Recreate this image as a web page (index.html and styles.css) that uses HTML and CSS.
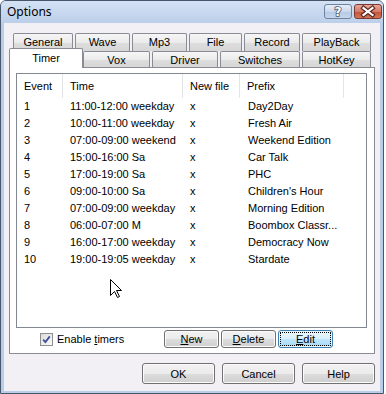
FILE: index.html
```html
<!DOCTYPE html>
<html>
<head>
<meta charset="utf-8">
<title>Options</title>
<link rel="stylesheet" href="styles.css">
</head>
<body>
<div class="window">
  <div class="titlebar">
    <span class="title">Options</span>
    <div class="caption">
      <div class="cbtn cbtn-help">
        <svg width="26" height="13" viewBox="0 0 26 13"><text x="13" y="11" text-anchor="middle" class="qmark">?</text></svg>
      </div>
      <div class="cbtn cbtn-close">
        <svg width="26" height="13" viewBox="0 0 26 13">
          <path d="M8.5 3 L17.5 10 M17.5 3 L8.5 10" class="x-dark"/>
          <path d="M8.5 3 L17.5 10 M17.5 3 L8.5 10" class="x-light"/>
        </svg>
      </div>
    </div>
  </div>
  <div class="client">
    <div class="tabs">
      <div class="tabrow row1">
        <div class="tab">General</div>
        <div class="tab">Wave</div>
        <div class="tab">Mp3</div>
        <div class="tab">File</div>
        <div class="tab">Record</div>
        <div class="tab">PlayBack</div>
      </div>
      <div class="tabrow row2">
        <div class="tab selected">Timer</div>
        <div class="tab">Vox</div>
        <div class="tab">Driver</div>
        <div class="tab">Switches</div>
        <div class="tab">HotKey</div>
      </div>
    </div>
    <div class="panel">
      <div class="listview">
        <div class="lv-header">
          <div class="hcell">Event</div>
          <div class="hcell">Time</div>
          <div class="hcell">New file</div>
          <div class="hcell">Prefix</div>
          <div class="hcell filler"></div>
        </div>
        <div class="lv-row"><span>1</span><span>11:00-12:00 weekday</span><span>x</span><span>Day2Day</span></div>
        <div class="lv-row"><span>2</span><span>10:00-11:00 weekday</span><span>x</span><span>Fresh Air</span></div>
        <div class="lv-row"><span>3</span><span>07:00-09:00 weekend</span><span>x</span><span>Weekend Edition</span></div>
        <div class="lv-row"><span>4</span><span>15:00-16:00 Sa</span><span>x</span><span>Car Talk</span></div>
        <div class="lv-row"><span>5</span><span>17:00-19:00 Sa</span><span>x</span><span>PHC</span></div>
        <div class="lv-row"><span>6</span><span>09:00-10:00 Sa</span><span>x</span><span>Children's Hour</span></div>
        <div class="lv-row"><span>7</span><span>07:00-09:00 weekday</span><span>x</span><span>Morning Edition</span></div>
        <div class="lv-row"><span>8</span><span>06:00-07:00 M</span><span>x</span><span>Boombox Classr...</span></div>
        <div class="lv-row"><span>9</span><span>16:00-17:00 weekday</span><span>x</span><span>Democracy Now</span></div>
        <div class="lv-row"><span>10</span><span>19:00-19:05 weekday</span><span>x</span><span>Stardate</span></div>
        <svg class="cursor" width="13" height="20" viewBox="0 0 13 20">
          <path d="M0.5 0.5 L0.5 16.5 L4.5 12.5 L7.5 18.5 L9.5 17.5 L6.5 11.5 L11.5 11.5 Z" fill="#fff" stroke="#000" stroke-width="1" stroke-linejoin="miter"/>
        </svg>
      </div>
      <div class="panel-footer">
        <label class="check">
          <span class="box">
            <svg width="11" height="11" viewBox="0 0 11 11"><path d="M2.2 5.6 L4.4 8 L8.8 2.4" fill="none" stroke="#3d4f96" stroke-width="1.8"/></svg>
          </span>
          <span>Enable <u>t</u>imers</span>
        </label>
        <div class="btn-group">
          <button class="btn btn-sm"><u>N</u>ew</button>
          <button class="btn btn-sm"><u>D</u>elete</button>
          <button class="btn btn-sm btn-focus"><u>E</u>dit</button>
        </div>
      </div>
    </div>
    <div class="dialog-buttons">
      <button class="btn btn-lg">OK</button>
      <button class="btn btn-lg">Cancel</button>
      <button class="btn btn-lg">Help</button>
    </div>
  </div>
</div>
</body>
</html>
```
FILE: styles.css
```css
* { box-sizing: border-box; }
html, body { margin: 0; padding: 0; }
body {
  width: 386px;
  height: 394px;
  overflow: hidden;
  background: #ffffff;
  font-family: "Liberation Sans", Arial, sans-serif;
  font-size: 11px;
  color: #000;
}

.window {
  width: 384px;
  height: 394px;
  border: 1px solid #48566c;
  border-radius: 6px 6px 0 0;
  background: #b9cde8;
  display: flex;
  flex-direction: column;
  overflow: hidden;
}

.titlebar {
  height: 22px;
  flex: none;
  display: flex;
  align-items: flex-start;
  background: linear-gradient(#d4e2f4, #bccfea);
}
.title {
  font-family: "Noto Sans", "Liberation Sans", sans-serif;
  font-size: 12px;
  line-height: 22px;
  padding-left: 6px;
  color: #000;
}
.caption {
  margin-left: auto;
  margin-top: 3px;
  margin-right: 1px;
  display: flex;
  gap: 2px;
}
.cbtn {
  width: 28px;
  height: 15px;
  border-radius: 3px;
  display: flex;
  align-items: center;
  justify-content: center;
}
.cbtn-help {
  border: 1px solid #6f829f;
  background: linear-gradient(#e6eef8 0%, #cad9ec 50%, #b5c9e3 51%, #c4d6ee 100%);
}
.cbtn-close {
  border: 1px solid #7b3a30;
  background: linear-gradient(#e5a99d 0%, #d67a66 50%, #c34f36 51%, #d0765b 100%);
}
.qmark {
  font-family: "DejaVu Sans", sans-serif;
  font-weight: bold;
  font-size: 12px;
  fill: #ffffff;
  stroke: #4a5870;
  stroke-width: 1.6px;
  paint-order: stroke;
}
.x-dark { stroke: #5e241b; stroke-width: 4.4; stroke-linecap: square; fill: none; }
.x-light { stroke: #ffffff; stroke-width: 2.2; stroke-linecap: square; fill: none; }

.client {
  flex: 1;
  margin: 0 3px 2px 3px;
  background: #f2f0f5;
  display: flex;
  flex-direction: column;
}

.tabs {
  margin: 10px 5px 0 5px;
}
.tabrow {
  display: grid;
  gap: 2px;
}
.row1 {
  height: 18px;
  padding-left: 4px;
  grid-template-columns: 60px 55px 55px 53px 56px 69px;
}
.row2 {
  height: 16px;
  padding-left: 2px;
  grid-template-columns: 70px 67px 66px 80px 69px;
}
.tab {
  border: 1px solid #898c95;
  border-bottom: none;
  border-radius: 2px 2px 0 0;
  background: linear-gradient(#f6f6f6 0%, #ebebeb 50%, #dedede 51%, #d6d6d6 100%);
  display: flex;
  align-items: center;
  justify-content: center;
  white-space: nowrap;
}
.row1 .tab { padding-bottom: 1px; }
.tab.selected {
  position: relative;
  z-index: 1;
  margin: -3px -2px -1px -2px;
  background: #ffffff;
  padding-bottom: 1px;
}

.panel {
  height: 287px;
  margin: 0 5px;
  border: 1px solid #898c95;
  background: #ffffff;
  padding: 5px 7px 0 6px;
}

.listview {
  position: relative;
  height: 255px;
  border: 1px solid #828790;
  background: #ffffff;
}
.lv-header,
.lv-row {
  display: grid;
  grid-template-columns: 46px 120px 57px 104px 1fr;
}
.lv-header { height: 24px; }
.hcell {
  border-right: 1px solid #e2e4e8;
  padding-left: 7px;
  line-height: 24px;
  white-space: nowrap;
}
.hcell.filler { border-right: none; }
.lv-row { height: 17px; line-height: 17px; }
.lv-row span {
  padding-left: 7px;
  white-space: nowrap;
  overflow: hidden;
}
.lv-row span:nth-child(4) { padding-left: 8px; }
.cursor {
  position: absolute;
  left: 93px;
  top: 205px;
}

.panel-footer {
  display: flex;
  align-items: center;
  height: 18px;
  margin-top: 2px;
}
.check {
  display: flex;
  align-items: center;
  gap: 4px;
  margin-left: 24px;
}
.box {
  width: 13px;
  height: 13px;
  border: 1px solid #8e8f8f;
  background: linear-gradient(135deg, #dcdcdc, #fbfbfb);
  display: flex;
  align-items: center;
  justify-content: center;
}
.btn-group {
  margin-left: auto;
  margin-right: 34px;
  display: flex;
  gap: 2px;
}

.btn {
  font-family: inherit;
  font-size: 11px;
  color: #000;
  padding: 0;
  border: 1px solid #707070;
  border-radius: 3px;
  background: linear-gradient(#f2f2f2 0%, #ebebeb 50%, #dddddd 51%, #cfcfcf 100%);
  box-shadow: inset 0 0 0 1px #fbfbfb;
}
.btn-sm { width: 55px; height: 18px; }
.btn-lg { width: 73px; height: 21px; }
.btn-focus {
  border-color: #3c7fb1;
  background: linear-gradient(#eaf6fd 0%, #d9f0fc 50%, #bee6fd 51%, #a7d9f5 100%);
  box-shadow: inset 0 0 0 1px #e8f6fd;
  outline: 1px dotted #000;
  outline-offset: -3px;
}

.dialog-buttons {
  display: flex;
  justify-content: flex-end;
  gap: 7px;
  margin-top: 9px;
  padding-right: 5px;
}
```
